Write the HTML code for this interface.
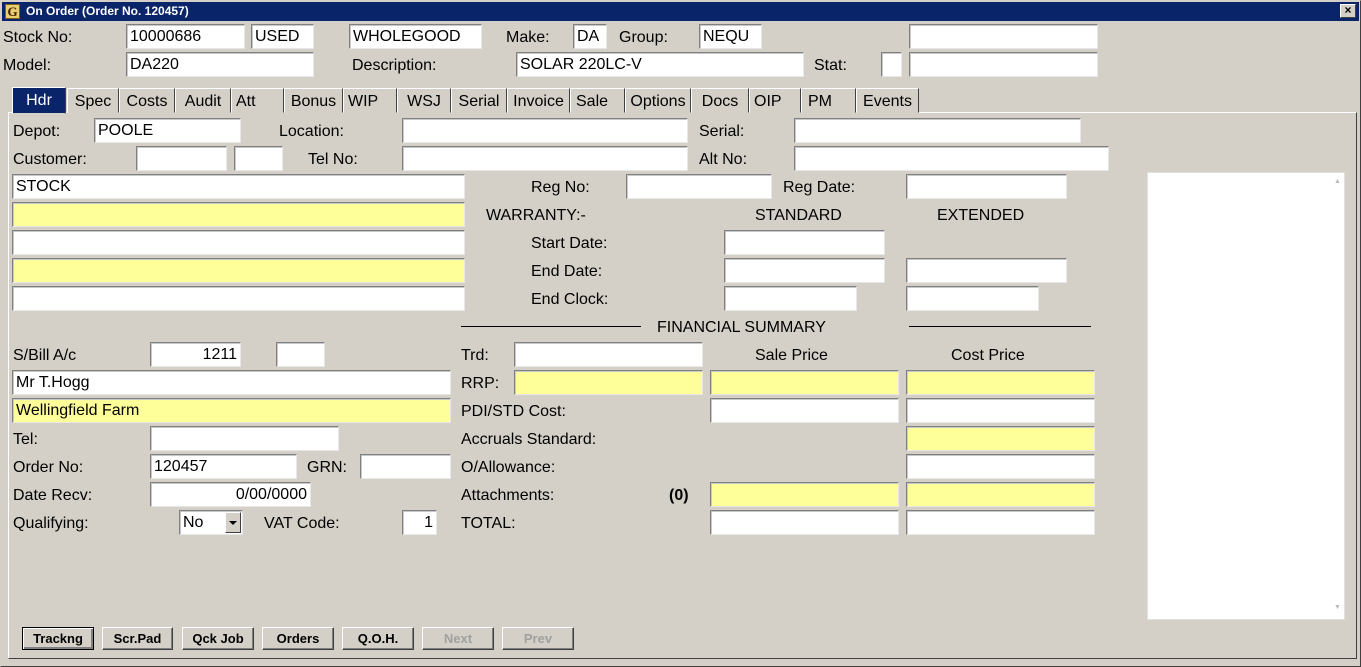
<!DOCTYPE html>
<html><head><meta charset="utf-8"><style>
*{box-sizing:border-box;margin:0;padding:0}
body{width:1361px;height:667px;background:#d4d0c8;font-family:"Liberation Sans",Arial,sans-serif;font-size:16px;color:#000;position:relative;overflow:hidden}
.a{position:absolute}
.l{position:absolute;line-height:27px;white-space:nowrap}
.i{position:absolute;height:25px;background:#fff;border:1px solid;border-color:#808080 #e8e8e8 #e8e8e8 #808080;box-shadow:inset 1px 1px 0 #c8c8c8;line-height:24px;padding:0 3px;white-space:nowrap;overflow:hidden}
.y{background:#ffff99}
.r{text-align:right}
.tab{position:absolute;top:88px;height:25px;border:1px solid;border-color:#fff #404040 #d4d0c8 #fff;line-height:25px;text-align:center;font-size:16px}
.b{position:absolute;top:627px;height:23px;border:1px solid;border-color:#fff #404040 #404040 #fff;box-shadow:inset -1px -1px 0 #808080;font:bold 13px "Liberation Sans",Arial,sans-serif;text-align:center;line-height:22px}
</style></head><body>
<div class="a" style="left:0;top:0;width:1361px;height:667px;border:1px solid;border-color:#d4d0c8 #404040 #404040 #d4d0c8"></div>
<div class="a" style="left:2px;top:2px;width:1357px;height:19px;background:#0a246a;color:#fff;font:bold 12px 'Liberation Sans',Arial,sans-serif;line-height:19px;padding-left:24px">On Order (Order No. 120457)</div>
<div class="a" style="left:5px;top:4px;width:15px;height:15px;background:#e8d070;border:1px solid #806020;color:#402000;font:bold 13px 'Liberation Serif',serif;text-align:center;line-height:13px">G</div>
<div class="a" style="left:1340px;top:4px;width:16px;height:14px;background:#d4d0c8;border:1px solid;border-color:#fff #404040 #404040 #fff;font:bold 12px 'Liberation Sans',sans-serif;line-height:11px;text-align:center">×</div>

<div class="l" style="left:3px;top:24px">Stock No:</div>
<div class="i" style="left:126px;top:24px;width:119px">10000686</div>
<div class="i" style="left:251px;top:24px;width:63px">USED</div>
<div class="i" style="left:349px;top:24px;width:133px">WHOLEGOOD</div>
<div class="l" style="left:506px;top:24px">Make:</div>
<div class="i" style="left:573px;top:24px;width:34px">DA</div>
<div class="l" style="left:619px;top:24px">Group:</div>
<div class="i" style="left:699px;top:24px;width:63px">NEQU</div>
<div class="i" style="left:909px;top:24px;width:189px"></div>
<div class="l" style="left:3px;top:52px">Model:</div>
<div class="i" style="left:126px;top:52px;width:188px">DA220</div>
<div class="l" style="left:352px;top:52px">Description:</div>
<div class="i" style="left:516px;top:52px;width:288px">SOLAR 220LC-V</div>
<div class="l" style="left:814px;top:52px">Stat:</div>
<div class="i" style="left:881px;top:52px;width:21px"></div>
<div class="i" style="left:909px;top:52px;width:189px"></div>

<div class="a" style="left:8px;top:112px;width:1349px;height:547px;border:1px solid;border-color:#fff #404040 #404040 #fff"></div>
<div class="tab" style="left:12px;width:54px;background:#0a246a;color:#fff;top:87px;height:27px">Hdr</div>
<div class="tab" style="left:67px;width:52px">Spec</div>
<div class="tab" style="left:119px;width:56px">Costs</div>
<div class="tab" style="left:175px;width:56px">Audit</div>
<div class="tab" style="left:231px;width:53px;text-align:left;padding-left:4px">Att</div>
<div class="tab" style="left:284px;width:59px">Bonus</div>
<div class="tab" style="left:343px;width:54px;text-align:left;padding-left:4px">WIP</div>
<div class="tab" style="left:397px;width:54px">WSJ</div>
<div class="tab" style="left:451px;width:56px">Serial</div>
<div class="tab" style="left:507px;width:63px">Invoice</div>
<div class="tab" style="left:570px;width:55px;text-align:left;padding-left:5px">Sale</div>
<div class="tab" style="left:625px;width:66px">Options</div>
<div class="tab" style="left:691px;width:58px">Docs</div>
<div class="tab" style="left:749px;width:52px;text-align:left;padding-left:4px">OIP</div>
<div class="tab" style="left:801px;width:55px;text-align:left;padding-left:6px">PM</div>
<div class="tab" style="left:856px;width:63px">Events</div>

<div class="l" style="left:13px;top:118px">Depot:</div>
<div class="i" style="left:94px;top:118px;width:147px">POOLE</div>
<div class="l" style="left:279px;top:118px">Location:</div>
<div class="i" style="left:402px;top:118px;width:286px"></div>
<div class="l" style="left:699px;top:118px">Serial:</div>
<div class="i" style="left:794px;top:118px;width:287px"></div>
<div class="l" style="left:13px;top:146px">Customer:</div>
<div class="i" style="left:136px;top:146px;width:91px"></div>
<div class="i" style="left:234px;top:146px;width:49px"></div>
<div class="l" style="left:308px;top:146px">Tel No:</div>
<div class="i" style="left:402px;top:146px;width:286px"></div>
<div class="l" style="left:699px;top:146px">Alt No:</div>
<div class="i" style="left:794px;top:146px;width:315px"></div>

<div class="i" style="left:12px;top:174px;width:453px">STOCK</div>
<div class="i y" style="left:12px;top:202px;width:453px"></div>
<div class="i" style="left:12px;top:230px;width:453px"></div>
<div class="i y" style="left:12px;top:258px;width:453px"></div>
<div class="i" style="left:12px;top:286px;width:453px"></div>

<div class="l" style="left:531px;top:174px">Reg No:</div>
<div class="i" style="left:626px;top:174px;width:146px"></div>
<div class="l" style="left:783px;top:174px">Reg Date:</div>
<div class="i" style="left:906px;top:174px;width:161px"></div>
<div class="l" style="left:486px;top:202px">WARRANTY:-</div>
<div class="l" style="left:755px;top:202px">STANDARD</div>
<div class="l" style="left:937px;top:202px">EXTENDED</div>
<div class="l" style="left:531px;top:230px">Start Date:</div>
<div class="i" style="left:724px;top:230px;width:161px"></div>
<div class="l" style="left:531px;top:258px">End Date:</div>
<div class="i" style="left:724px;top:258px;width:161px"></div>
<div class="i" style="left:906px;top:258px;width:161px"></div>
<div class="l" style="left:531px;top:286px">End Clock:</div>
<div class="i" style="left:724px;top:286px;width:133px"></div>
<div class="i" style="left:906px;top:286px;width:133px"></div>

<div class="a" style="left:461px;top:326px;width:180px;height:1px;background:#000"></div>
<div class="l" style="left:657px;top:314px">FINANCIAL SUMMARY</div>
<div class="a" style="left:909px;top:326px;width:182px;height:1px;background:#000"></div>

<div class="l" style="left:13px;top:342px">S/Bill A/c</div>
<div class="i r" style="left:150px;top:342px;width:91px">1211</div>
<div class="i" style="left:276px;top:342px;width:49px"></div>
<div class="l" style="left:461px;top:342px">Trd:</div>
<div class="i" style="left:514px;top:342px;width:189px"></div>
<div class="l" style="left:755px;top:342px">Sale Price</div>
<div class="l" style="left:951px;top:342px">Cost Price</div>

<div class="i" style="left:12px;top:370px;width:439px">Mr T.Hogg</div>
<div class="l" style="left:461px;top:370px">RRP:</div>
<div class="i y" style="left:514px;top:370px;width:189px"></div>
<div class="i y" style="left:710px;top:370px;width:189px"></div>
<div class="i y" style="left:906px;top:370px;width:189px"></div>

<div class="i y" style="left:12px;top:398px;width:439px">Wellingfield Farm</div>
<div class="l" style="left:461px;top:398px">PDI/STD Cost:</div>
<div class="i" style="left:710px;top:398px;width:189px"></div>
<div class="i" style="left:906px;top:398px;width:189px"></div>

<div class="l" style="left:13px;top:426px">Tel:</div>
<div class="i" style="left:150px;top:426px;width:189px"></div>
<div class="l" style="left:461px;top:426px">Accruals Standard:</div>
<div class="i y" style="left:906px;top:426px;width:189px"></div>

<div class="l" style="left:13px;top:454px">Order No:</div>
<div class="i" style="left:150px;top:454px;width:147px">120457</div>
<div class="l" style="left:307px;top:454px">GRN:</div>
<div class="i" style="left:360px;top:454px;width:91px"></div>
<div class="l" style="left:461px;top:454px">O/Allowance:</div>
<div class="i" style="left:906px;top:454px;width:189px"></div>

<div class="l" style="left:13px;top:482px">Date Recv:</div>
<div class="i r" style="left:150px;top:482px;width:161px">0/00/0000</div>
<div class="l" style="left:461px;top:482px">Attachments:</div>
<div class="l" style="left:669px;top:482px;font-weight:bold">(0)</div>
<div class="i y" style="left:710px;top:482px;width:189px"></div>
<div class="i y" style="left:906px;top:482px;width:189px"></div>

<div class="l" style="left:13px;top:510px">Qualifying:</div>
<div class="i" style="left:179px;top:510px;width:64px">No</div>
<div class="a" style="left:225px;top:512px;width:16px;height:21px;background:#d4d0c8;border:1px solid;border-color:#fff #404040 #404040 #fff"></div>
<div class="a" style="left:229px;top:521px;width:0;height:0;border-left:4px solid transparent;border-right:4px solid transparent;border-top:4px solid #000"></div>
<div class="l" style="left:264px;top:510px">VAT Code:</div>
<div class="i r" style="left:402px;top:510px;width:35px">1</div>
<div class="l" style="left:461px;top:510px">TOTAL:</div>
<div class="i" style="left:710px;top:510px;width:189px"></div>
<div class="i" style="left:906px;top:510px;width:189px"></div>

<div class="a" style="left:1147px;top:172px;width:198px;height:448px;background:#fff;border:1px solid #e0e0e0"></div>
<div class="a" style="left:1334px;top:178px;color:#bbb;font-size:7px">▲</div>
<div class="a" style="left:1334px;top:604px;color:#bbb;font-size:7px">▼</div>

<div class="b" style="left:22px;width:72px;border-color:#000;box-shadow:inset 1px 1px 0 #fff,inset -2px -2px 0 #808080">Trackng</div>
<div class="b" style="left:102px;width:71px">Scr.Pad</div>
<div class="b" style="left:182px;width:72px">Qck Job</div>
<div class="b" style="left:262px;width:72px">Orders</div>
<div class="b" style="left:342px;width:72px">Q.O.H.</div>
<div class="b" style="left:422px;width:72px;color:#a0a0a0">Next</div>
<div class="b" style="left:502px;width:72px;color:#a0a0a0">Prev</div>
</body></html>
